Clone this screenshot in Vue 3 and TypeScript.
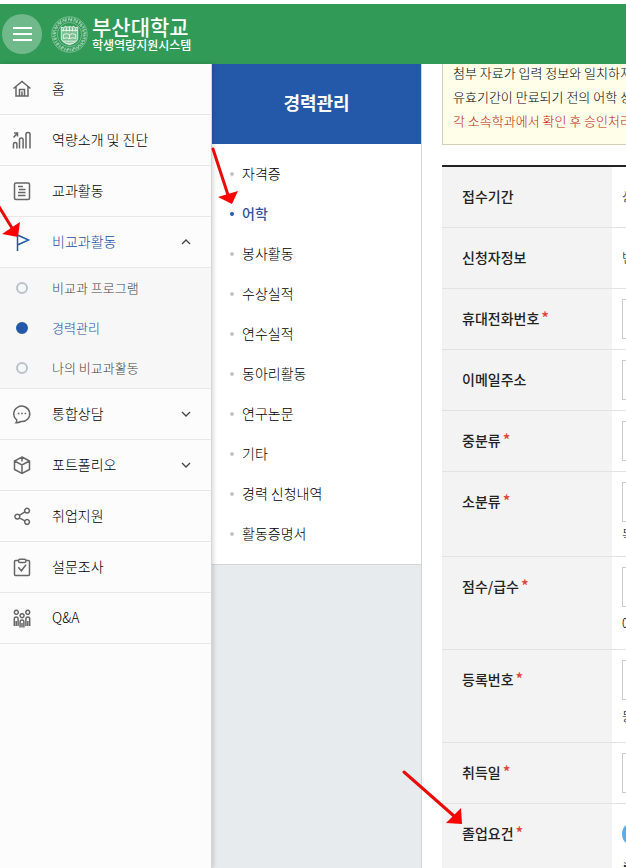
<script setup lang="ts">
import { ref } from 'vue'

interface MenuItem {
  label: string
  icon: string
  children?: string[]
  expandable?: boolean
}

interface FormRow {
  label: string
  id: string
  kind: 'text' | 'input' | 'select' | 'radio'
  required?: boolean
  value?: string
  hint?: string
  spaced?: boolean
}

const menu: MenuItem[] = [
  { label: '홈', icon: 'home' },
  { label: '역량소개 및 진단', icon: 'chart' },
  { label: '교과활동', icon: 'doc' },
  { label: '비교과활동', icon: 'flag', expandable: true, children: ['비교과 프로그램', '경력관리', '나의 비교과활동'] },
  { label: '통합상담', icon: 'chat', expandable: true },
  { label: '포트폴리오', icon: 'box', expandable: true },
  { label: '취업지원', icon: 'share' },
  { label: '설문조사', icon: 'survey' },
  { label: 'Q&A', icon: 'people' },
]

const icons: Record<string, string> = {
  home: 'M1.5 9.5 10 2.5l8.500 7M4 7.500v9.500h12V7.500M7.500 17v-6.500h5V17M10 12.500V17',
  chart: 'M1.500 18.500v-4.500q0-1.500 1.700-1.500t1.700 1.500v4.500M7.500 18.500V9.500q0-1.500 1.800-1.500t1.800 1.500v9M14 18.500V4q0-1.500 2-1.500T18 4v14.500M1.500 7.500 5.500 3M2 3h3.500v3.500',
  doc: 'M4 2h12q1.500 0 1.500 1.500v13.500q0 1.500-1.500 1.500H4q-1.500 0-1.500-1.500V3.500Q2.500 2 4 2ZM6 5.500h5M7 8.500h6.500M6 11.500h7.500M6 14.500h7.500',
  flag: 'M5.500 2.500V19M5.500 3l11 5-11 5',
  chat: 'M4.700 15.800A8 7.700 0 1 1 9 17.500Q6.500 19 4 18.700q1-1 .7-2.900ZM5.800 9.500h1.600M9.200 9.500h1.600M12.600 9.500h1.600',
  box: 'M10 2l7.500 4v8.500l-7.500 4-7.500-4V6ZM2.500 6l7.500 4 7.500-4M10 10v8.500M10 2v4.500',
  share: 'M7.300 9.300l5.200-3.200M7.300 11.900l5.200 2.700M5.300 8.200a2.400 2.400 0 1 0 .1 0ZM15 2.300a2.400 2.400 0 1 0 .1 0ZM15 13.600a2.400 2.400 0 1 0 .1 0Z',
  survey: 'M6.500 3.500H3.500q-1 0-1 1v13q0 1 1 1h13q1 0 1-1v-13q0-1-1-1h-3M8 2.300h4.500q1.500 0 1.500 1.500T12.500 5.500H8Q6.500 5.500 6.500 3.900T8 2.300ZM6.300 10.200l3 3.500 4.700-6',
  people: 'M4.300 2.300a2 2 0 1 0 .1 0ZM15.700 2.300a2 2 0 1 0 .1 0ZM10 5.700a2 2 0 1 0 .1 0ZM2.300 18v-7q0-2 1.900-2t1.900 2v7M13.900 18v-7q0-2 1.900-2t1.900 2v7M8.100 19.500v-5.500q0-2 1.900-2t1.900 2v5.500M4.200 13v5M15.800 13v5M10 15v4.500',
}

const openMenu = ref('비교과활동')
const currentSub = '경력관리'

const careerItems: string[] = ['자격증', '어학', '봉사활동', '수상실적', '연수실적', '동아리활동', '연구논문', '기타', '경력 신청내역', '활동증명서']
const currentCareer = '어학'

const rows: FormRow[] = [
  { label: '접수기간', id: 'period', kind: 'text', value: '상' },
  { label: '신청자정보', id: 'applicant', kind: 'text', value: '변' },
  { label: '휴대전화번호', id: 'phone', kind: 'input', required: true },
  { label: '이메일주소', id: 'email', kind: 'input' },
  { label: '중분류', id: 'middle', kind: 'select', required: true },
  { label: '소분류', id: 'small', kind: 'select', required: true, hint: '목' },
  { label: '점수/급수', id: 'score', kind: 'input', required: true, hint: '0', spaced: true },
  { label: '등록번호', id: 'number', kind: 'input', required: true, hint: '등', spaced: true },
  { label: '취득일', id: 'date', kind: 'input', required: true },
  { label: '졸업요건', id: 'graduation', kind: 'radio', required: true, hint: '※' },
]

function toggle(item: MenuItem) {
  if (item.expandable) openMenu.value = openMenu.value === item.label ? '' : item.label
}
</script>

<template>
  <div class="page">
    <header class="topbar">
      <button class="hamburger" type="button" aria-label="메뉴">
        <span></span><span></span><span></span>
      </button>
      <a class="brand" href="#">
        <svg class="seal" viewBox="0 0 36 38" aria-hidden="true">
          <circle cx="18" cy="19" r="15.500" class="ring-text" />
          <circle cx="18" cy="19" r="14" class="ring-text inner-text" />
          <circle cx="18" cy="19" r="17.300" class="ring" />
          <circle cx="18" cy="19" r="11.800" class="ring" />
          <path class="shield" d="M10 12q3 1 4-1 2 1.500 4 0 2 1.500 4 0 1 2 4 1v11q-1 4-8 6-7-2-8-6Z" />
          <path class="detail" d="M10 15h16M12 13v3M15 12v4M18 12v4M21 12v4M24 13v3M12 19q3-1.500 6 0 3-1.500 6 0v4q-3-1.500-6 0-3-1.500-6 0ZM18 19v4M12 25.500h12M14 27.500h8" />
        </svg>
        <span class="brand-text">
          <strong>부산대학교</strong>
          <span>학생역량지원시스템</span>
        </span>
      </a>
    </header>

    <div class="body">
      <nav class="side">
        <ul>
          <li v-for="item in menu" :key="item.label">
            <a href="#" class="side-link" :class="{ current: item.icon === 'flag' }" @click.prevent="toggle(item)">
              <svg class="icon" viewBox="0 0 20 20" aria-hidden="true"><path :d="icons[item.icon]" /></svg>
              <span class="side-label label">{{ item.label }}</span>
              <svg v-if="item.expandable" class="chevron" viewBox="0 0 10 10" aria-hidden="true">
                <path :d="openMenu === item.label ? 'M1 7l4-4 4 4' : 'M1 3l4 4 4-4'" />
              </svg>
            </a>
            <ul v-if="item.children && openMenu === item.label" class="sub">
              <li v-for="child in item.children" :key="child">
                <a href="#" :class="{ current: child === currentSub }">
                  <i class="dot"></i><span class="label">{{ child }}</span>
                </a>
              </li>
            </ul>
          </li>
        </ul>
      </nav>

      <aside class="career">
        <h2>경력관리</h2>
        <ul>
          <li v-for="item in careerItems" :key="item">
            <a href="#" :class="{ current: item === currentCareer }"><span class="label">{{ item }}</span></a>
          </li>
        </ul>
      </aside>

      <main class="content">
        <div class="form-area">
          <div class="notice">
            <p>첨부 자료가 입력 정보와 일치하지</p>
            <p>유효기간이 만료되기 전의 어학 성</p>
            <p class="warn">각 소속학과에서 확인 후 승인처리</p>
          </div>
          <table>
            <tbody>
              <tr v-for="row in rows" :key="row.id">
                <th scope="row">
                  <span v-if="row.kind === 'text'">{{ row.label }}</span>
                  <label v-else :for="row.id">{{ row.label }}</label>
                  <em v-if="row.required">*</em>
                </th>
                <td>
                  <p v-if="row.kind === 'text'" class="value">{{ row.value }}</p>
                  <input v-else-if="row.kind === 'input'" :id="row.id" class="field" type="text" />
                  <select v-else-if="row.kind === 'select'" :id="row.id" class="field"></select>
                  <div v-else class="choice"><input :id="row.id" type="radio" checked /></div>
                  <p v-if="row.hint" class="hint" :class="{ spaced: row.spaced }">{{ row.hint }}</p>
                </td>
              </tr>
            </tbody>
          </table>
        </div>
      </main>
    </div>

    <svg class="arrows" aria-hidden="true">
      <path class="shaft" d="M-2 205 12 228M213 149l15 46M404 772l50 44" />
      <path class="head" d="M18 237 2 234l18-12ZM232 204l-14-7 20-6ZM462 824l-16-1 15-15Z" />
    </svg>
  </div>
</template>

<style>
body {
  background: #fff;
  overflow: hidden;
}
</style>

<style scoped>
.page {
  position: relative;
  display: flex;
  flex-direction: column;
  box-sizing: border-box;
  height: 100vh;
  padding-top: 4px;
  overflow: hidden;
  color: #000;
  font-family: "Noto Sans CJK KR", "Noto Sans", sans-serif;
  font-size: 14px;
  font-weight: 300;
}
ul, p, h2 {
  margin: 0;
  padding: 0;
  list-style: none;
}
a {
  color: inherit;
  text-decoration: none;
}
.label {
  padding-bottom: 2px;
}

.topbar {
  display: flex;
  flex: none;
  align-items: center;
  gap: 9px;
  height: 60px;
  padding-left: 2px;
  background: #319a57;
  color: #fff;
}
.hamburger {
  display: flex;
  flex-direction: column;
  align-items: center;
  justify-content: center;
  gap: 4px;
  width: 40px;
  height: 40px;
  padding: 0;
  border: 0;
  border-radius: 50%;
  background: #70b98a;
}
.hamburger span {
  width: 19px;
  height: 2px;
  background: #fff;
}
.brand {
  display: flex;
  align-items: center;
  gap: 4px;
}
.seal {
  width: 37px;
  height: 39px;
  fill: none;
  stroke: #d5ecdd;
}
.ring { stroke-width: 0.6; opacity: 0.7; }
.ring-text { stroke-width: 2; stroke-dasharray: 1.300 1.500 2 0.900; opacity: 0.55; }
.inner-text { stroke-dasharray: 2.200 1.300 0.900 1.100; }
.shield { fill: #7cc093; stroke-width: 1; }
.detail { stroke: #e9f6ed; stroke-width: 0.9; }
.brand-text {
  display: flex;
  flex-direction: column;
}
.brand-text strong {
  font-size: 21px;
  font-weight: 500;
  line-height: 22px;
}
.brand-text span {
  font-size: 12px;
  font-weight: 500;
  line-height: 16px;
}

.body {
  display: flex;
  flex: 1;
  min-height: 0;
}
.side {
  flex: none;
  width: 211px;
  border-right: 1px solid #d3d6d9;
  background: #fcfcfc;
  box-shadow: 1px 0 5px rgba(0, 0, 0, 0.18);
  z-index: 1;
}
.side > ul > li {
  border-bottom: 1px solid #e7e7e7;
}
.side-link {
  display: flex;
  align-items: center;
  height: 50px;
  padding: 0 20px 0 12px;
}
.side-label {
  flex: 1;
  margin-left: 20px;
}
.side .current {
  color: #1a4fa3;
}
.icon {
  width: 20px;
  height: 20px;
  fill: none;
  stroke: #666;
  stroke-width: 1.5;
}
.current .icon {
  stroke: #2459a9;
}
.chevron {
  width: 10px;
  height: 10px;
  fill: none;
  stroke: #444;
  stroke-width: 1.3;
}
.sub {
  border-top: 1px solid #e7e7e7;
  background: #f7f7f7;
}
.sub a {
  display: flex;
  align-items: center;
  gap: 24px;
  height: 40px;
  padding-left: 16px;
  color: #444;
  font-size: 13px;
}
.dot {
  box-sizing: border-box;
  width: 12px;
  height: 12px;
  border: 2px solid #bcc2cc;
  border-radius: 50%;
}
.current .dot {
  border-color: #2459a9;
  background: #2459a9;
}

.career {
  flex: none;
  width: 209px;
  border-right: 1px solid #d3d6d9;
  background: #e8ebee;
}
.career h2 {
  padding-bottom: 4px;
  background: #2459a9;
  color: #fff;
  font-size: 18px;
  font-weight: 700;
  line-height: 76px;
  text-align: center;
}
.career ul {
  padding: 10px 0;
  border-bottom: 1px solid #d3d6d9;
  background: #fff;
}
.career a {
  display: flex;
  align-items: center;
  gap: 8px;
  height: 40px;
  padding-left: 18px;
}
.career a::before {
  content: "";
  width: 4px;
  height: 4px;
  border-radius: 50%;
  background: #c4c4c4;
}
.career .current {
  color: #2f529b;
  font-weight: 500;
}
.career .current::before {
  background: #2459a9;
}

.content {
  flex: 1;
  min-width: 0;
  padding-left: 20px;
  overflow: hidden;
}
.form-area {
  min-width: 600px;
  margin-top: -3px;
}
.notice {
  padding: 0 10px 11px;
  border: 1px solid #d8cdb8;
  border-top: 0;
  background: #fffee9;
  font-size: 13px;
  line-height: 24px;
}
.warn {
  color: #c01808;
}
table {
  width: 100%;
  margin-top: 20px;
  border-top: 2px solid #222;
  border-spacing: 0;
}
th, td {
  border-bottom: 1px solid #e2e2e2;
  vertical-align: top;
}
th {
  box-sizing: border-box;
  width: 170px;
  padding: 17px 20px 19px;
  background: #f3f3f3;
  color: #222;
  font-weight: 500;
  line-height: 24px;
  text-align: left;
}
th em {
  margin-left: 2px;
  color: #e0453a;
  font-size: 16px;
  font-style: normal;
  line-height: 16px;
}
td {
  padding: 10px;
}
.value {
  font-size: 13px;
  line-height: 38px;
  padding-bottom: 2px;
}
.field {
  display: block;
  box-sizing: border-box;
  width: 200px;
  height: 40px;
  border: 1px solid #ccc;
  border-radius: 0;
  background: #fff;
}
.choice {
  display: flex;
  align-items: center;
  height: 40px;
}
.choice input {
  width: 24px;
  height: 24px;
  margin: 0;
  border-radius: 50%;
  background: #5badea;
  appearance: none;
}
.hint {
  font-size: 13px;
  line-height: 24px;
}
.spaced {
  padding: 4px 0;
}

.arrows {
  position: absolute;
  inset: 0;
  z-index: 2;
  width: 100%;
  height: 100%;
  pointer-events: none;
}
.shaft {
  fill: none;
  stroke: #e80c08;
  stroke-width: 3;
  stroke-linecap: round;
}
.head {
  fill: #f00;
}
</style>
